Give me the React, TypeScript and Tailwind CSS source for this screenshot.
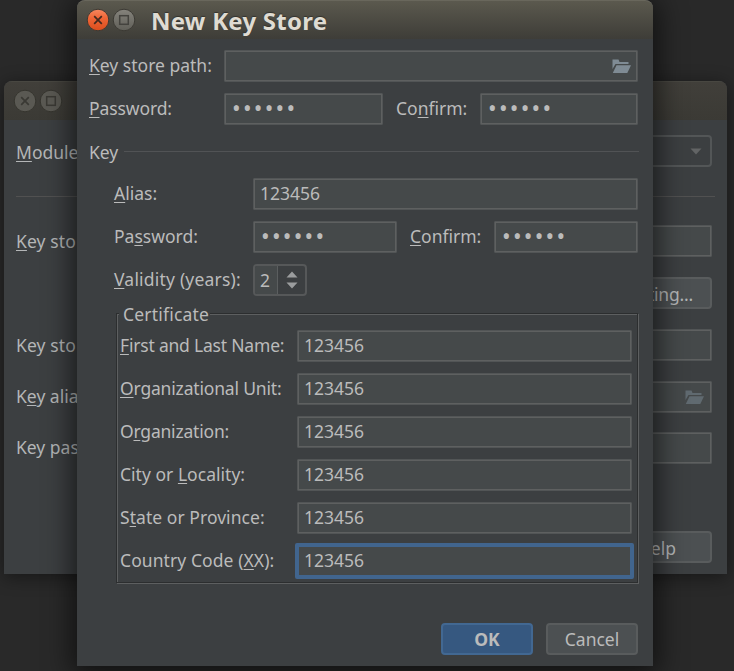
import type { ReactNode } from "react";

function Label({ text, m, className = "" }: { text: string; m?: number; className?: string }) {
  return (
    <span className={`shrink-0 whitespace-pre ${className}`}>
      {m === undefined ? (
        text
      ) : (
        <>
          {text.slice(0, m)}
          <span className="underline decoration-1 underline-offset-2">{text[m]}</span>
          {text.slice(m + 1)}
        </>
      )}
    </span>
  );
}

function Field({ children, className = "" }: { children?: ReactNode; className?: string }) {
  return (
    <div
      className={`flex h-8 items-center rounded-[1px] border border-[#525556] bg-[#45494a] pl-[6px] shadow-[inset_0_0_0_1px_#5e6060] ${className}`}
    >
      {children}
    </div>
  );
}

function Value({ children }: { children: ReactNode }) {
  return <span className="pb-[2px]">{children}</span>;
}

function Dots() {
  return <span className="pb-px pl-px text-[23px] leading-none tracking-[2.25px]">••••••</span>;
}

function Folder({ className = "" }: { className?: string }) {
  return (
    <svg width="20" height="15" viewBox="0 0 20 15" className={className}>
      <path d="M0.5 0.5H6.5L7.5 3H16.5V5H3.5L0.5 10Z" fill="currentColor" />
      <path d="M4.5 6.2H19L15.3 14H0.8Z" fill="currentColor" />
    </svg>
  );
}

function CloseButton({ active }: { active?: boolean }) {
  return (
    <svg width="24" height="24" viewBox="0 0 24 24">
      <defs>
        <linearGradient id="orange" x1="0" y1="0" x2="0" y2="1">
          <stop offset="0" stopColor="#f68860" />
          <stop offset="0.4" stopColor="#ef6637" />
          <stop offset="1" stopColor="#dc4d1c" />
        </linearGradient>
      </defs>
      <circle cx="12" cy="12" r="10.8" fill={active ? "url(#orange)" : "#5a5953"} stroke={active ? "#3b3933" : "#36352f"} />
      <path d="M8.2 8.2L15.8 15.8M15.8 8.2L8.2 15.8" stroke={active ? "#43291f" : "#3a3934"} strokeWidth="1.7" />
    </svg>
  );
}

function MaxButton({ active }: { active?: boolean }) {
  return (
    <svg width="24" height="24" viewBox="0 0 24 24">
      <defs>
        <linearGradient id="grey" x1="0" y1="0" x2="0" y2="1">
          <stop offset="0" stopColor="#85837c" />
          <stop offset="1" stopColor="#605f58" />
        </linearGradient>
      </defs>
      <circle cx="12" cy="12" r="10.8" fill={active ? "url(#grey)" : "#5a5953"} stroke={active ? "#3b3933" : "#36352f"} />
      <rect x="7.7" y="7.7" width="8.6" height="8.6" fill="none" stroke={active ? "#44433e" : "#3a3934"} strokeWidth="1.5" />
    </svg>
  );
}

function BackWindow() {
  return (
    <div className="absolute top-[81px] left-[4px] flex h-[493px] w-[723px] flex-col overflow-hidden rounded-t-lg bg-[#3c3f41] shadow-[0_3px_18px_rgba(0,0,0,0.45)]">
      <div className="flex h-[39px] shrink-0 items-center gap-[2px] border-t border-[#484741] bg-linear-to-b from-[#413f3a] to-[#3b3a35] pl-[9px]">
        <CloseButton />
        <MaxButton />
      </div>
      <div className="flex flex-1 flex-col pr-[15px] pl-3 text-[#b4b6b7]">
        <div className="mt-[15px] flex h-8 items-center justify-between">
          <Label text="Module" m={0} className="pt-px" />
          <div className="flex h-8 w-[560px] items-center justify-end rounded-sm border-2 border-[#535657] pr-2">
            <svg width="12" height="7" viewBox="0 0 12 7">
              <path d="M0.5 0.5H11.5L6 6.5Z" fill="#626465" />
            </svg>
          </div>
        </div>
        <div className="mt-[29px] -mr-[3px] h-px bg-[#515151]" />
        <div className="mt-7 flex h-8 items-center justify-between">
          <Label text="Key sto" m={0} className="tracking-[0.1px]" />
          <Field className="w-[560px]" />
        </div>
        <div className="mt-5 flex justify-end">
          <div className="flex h-8 w-[178px] items-center justify-end rounded-sm border-2 border-[#595c5d] bg-[#4c5052] pr-[17px]">
            <Label text="ting..." className="pt-px tracking-[-0.2px]" />
          </div>
        </div>
        <div className="mt-5 flex h-8 items-center justify-between">
          <Label text="Key sto" className="tracking-[0.1px]" />
          <Field className="w-[560px]" />
        </div>
        <div className="mt-5 flex h-8 items-center justify-between">
          <Label text="Key alia" m={1} className="pb-[2px]" />
          <Field className="w-[560px] justify-end pr-[6px]">
            <Folder className="text-[#606a70]" />
          </Field>
        </div>
        <div className="mt-[19px] flex h-8 items-center justify-between">
          <Label text="Key pas" className="pb-[2px]" />
          <Field className="w-[560px]" />
        </div>
        <div className="mt-[67px] flex justify-end">
          <div className="flex h-8 w-[110px] items-center justify-end rounded-sm border-2 border-[#595c5d] bg-[#4c5052] pr-[34px]">
            <Label text="elp" className="pt-px" />
          </div>
        </div>
      </div>
    </div>
  );
}

const certificate = [
  { text: "First and Last Name:", m: 0, tracking: "tracking-[-0.2px]" },
  { text: "Organizational Unit:", m: 0, tracking: "tracking-[-0.17px]" },
  { text: "Organization:", m: 1, tracking: "tracking-[-0.2px]" },
  { text: "City or Locality:", m: 8, tracking: "tracking-[0.02px]" },
  { text: "State or Province:", m: 1, tracking: "tracking-[0.05px]" },
  { text: "Country Code (XX):", m: 14, tracking: "tracking-[0.08px]" },
];

function FrontWindow() {
  return (
    <div className="absolute top-0 left-[77px] flex h-[666px] w-[576px] flex-col rounded-t-lg bg-[#3c3f41] shadow-[0_4px_28px_5px_rgba(0,0,0,0.6)]">
      <div className="flex h-[39px] shrink-0 items-center rounded-t-lg border-t border-[#69675c] bg-linear-to-b from-[#5b594e] to-[#3e3d38] pl-[9px]">
        <div className="flex gap-[2px]">
          <CloseButton active />
          <MaxButton active />
        </div>
        <span className="ml-[15px] pt-px text-[24px] leading-none font-bold tracking-[0.25px] whitespace-pre text-[#dfdbd2] [text-shadow:0_-1px_1px_#33322e]">
          New Key Store
        </span>
      </div>
      <div className="flex flex-1 flex-col pr-[15px] pl-3">
        <div className="mt-[11px] flex h-8 items-center">
          <Label text="Key store path:" m={0} className="w-[135px] pb-[2px]" />
          <Field className="flex-1 justify-end pr-[5px]">
            <Folder className="text-[#7f8b94]" />
          </Field>
        </div>
        <div className="mt-[11px] flex h-8 items-center">
          <Label text="Password:" m={0} className="w-[135px] pb-[2px] tracking-[-0.1px]" />
          <Field className="w-[159px]">
            <Dots />
          </Field>
          <Label text="Confirm:" m={2} className="ml-[13px] w-[84px] pb-[2px]" />
          <Field className="flex-1">
            <Dots />
          </Field>
        </div>
        <div className="-mr-px mt-[14px] flex h-6 items-center">
          <Label text="Key" className="w-[35px] pt-[2px]" />
          <div className="h-px flex-1 bg-[#515355]" />
        </div>
        <div className="mt-[15px] flex h-8 items-center pl-[25px]">
          <Label text="Alias:" m={0} className="w-[139px] pb-[2px]" />
          <Field className="flex-1">
            <Value>123456</Value>
          </Field>
        </div>
        <div className="mt-[11px] flex h-8 items-center pl-[25px]">
          <Label text="Password:" m={2} className="w-[139px] pb-[2px]" />
          <Field className="w-[144px]">
            <Dots />
          </Field>
          <Label text="Confirm:" m={0} className="ml-[13px] w-[84px] pb-[2px]" />
          <Field className="flex-1">
            <Dots />
          </Field>
        </div>
        <div className="mt-[11px] flex h-8 items-center pl-[25px]">
          <Label text="Validity (years):" m={0} className="w-[139px] pb-[2px] tracking-[0.2px]" />
          <div className="flex h-8 w-[54px] overflow-hidden rounded-sm border-2 border-[#565859]">
            <div className="flex w-[23px] items-center border-r border-[#5b5e5f] bg-[#45494a] pl-[5px]">2</div>
            <div className="flex flex-1 items-center justify-center">
              <svg width="12" height="18" viewBox="0 0 12 18">
                <path d="M0.5 6.5L6 0.5L11.5 6.5ZM0.5 11.5L6 17.5L11.5 11.5Z" fill="#9b9d9e" />
              </svg>
            </div>
          </div>
        </div>
        <div className="mt-[17px] ml-[27px] flex h-[270px] w-[522px] shrink-0 flex-col border border-[#2c2e2f] pr-[5px] pl-[3px] shadow-[1px_1px_0_#5d5f60,inset_1px_1px_0_#5d5f60]">
          <div className="-mt-3 flex h-6">
            <Label text="Certificate" className="-ml-px bg-[#3c3f41] pr-px pl-1 leading-6 tracking-[0.2px]" />
          </div>
          <div className="mt-1 flex flex-col gap-[11px]">
            {certificate.map((row, i) => (
              <div key={row.text} className="flex h-8 items-center">
                <Label text={row.text} m={row.m} className={`w-[177px] pb-[2px] ${row.tracking}`} />
                {i === 5 ? (
                  <div className="-mr-[2px] -ml-[2px] flex h-9 flex-1 items-center rounded-[2px] border-4 border-[#41658e] bg-[#45494a] pl-[5px]">
                    <Value>123456</Value>
                  </div>
                ) : (
                  <Field className="flex-1">
                    <Value>123456</Value>
                  </Field>
                )}
              </div>
            ))}
          </div>
        </div>
        <div className="mt-10 flex justify-end gap-[13px]">
          <div className="flex h-8 w-[92px] items-center justify-center rounded-sm border-2 border-[#426892] bg-[#365880] font-bold">
            OK
          </div>
          <div className="flex h-8 w-[92px] items-center justify-center rounded-sm border-2 border-[#595c5d] bg-[#4c5052]">
            Cancel
          </div>
        </div>
      </div>
    </div>
  );
}

export default function App() {
  return (
    <div className="relative h-[671px] w-[734px] overflow-hidden bg-[#292929] font-['Noto_Sans',sans-serif] text-[17.5px] leading-6 text-[#bbbbbb]">
      <BackWindow />
      <FrontWindow />
    </div>
  );
}
